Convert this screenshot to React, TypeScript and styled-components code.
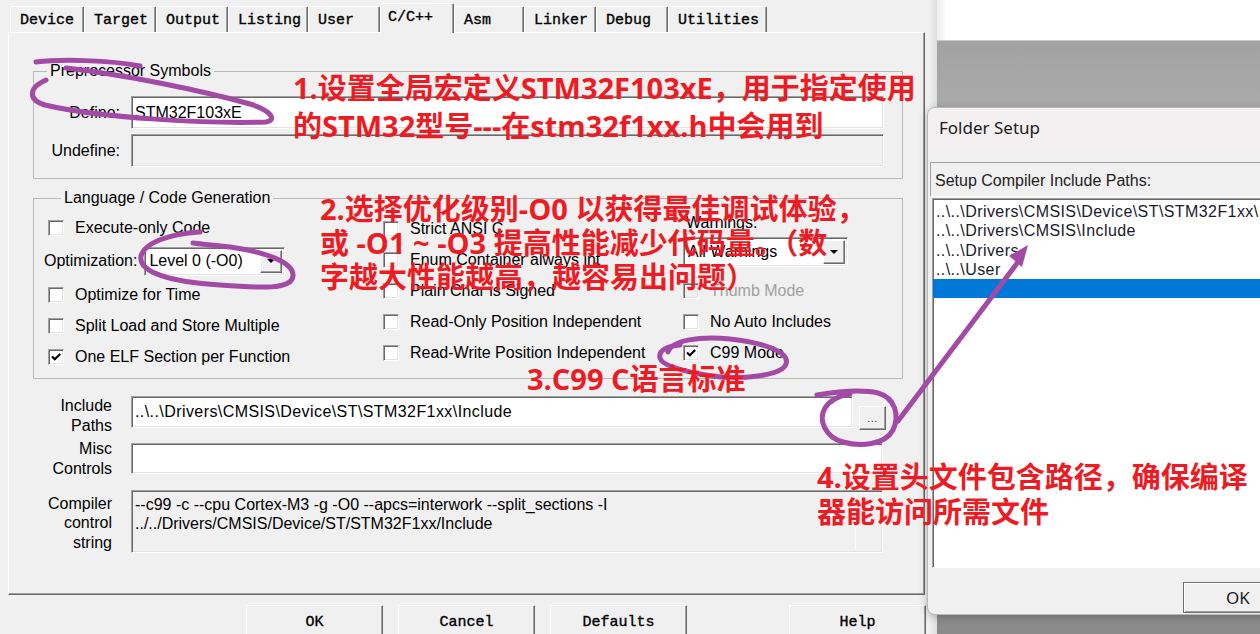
import React from "react";
import styled, { createGlobalStyle } from "styled-components";

const UI = `"Liberation Sans", Arial, sans-serif`;
const BITMAP = `"Liberation Mono", "Courier New", monospace`;
const SEGOE = `"Noto Sans", "Open Sans", sans-serif`;

const GlobalStyle = createGlobalStyle`
  html, body { margin: 0; padding: 0; background: #f0f0f0; }
  body { font-family: ${UI}; }
  * { box-sizing: border-box; }
`;

const Screen = styled.div`
  position: relative;
  width: 1260px;
  height: 634px;
  overflow: hidden;
  display: flex;
  font-family: ${UI};
  font-size: 16px;
  color: #000;
`;

/* ---------- main options window ---------- */
const MainWindow = styled.div`
  width: 937px;
  flex: none;
  display: flex;
  flex-direction: column;
  background: linear-gradient(to right, #f0f0f0 929px, #dedede 937px);
`;

const TabStrip = styled.div`
  height: 32px;
  flex: none;
  display: flex;
  align-items: flex-end;
  padding-left: 10px;
  position: relative;
  z-index: 1;
`;

const Tab = styled.div<{ $w: number; $active?: boolean }>`
  width: ${(p) => p.$w}px;
  height: ${(p) => (p.$active ? 30 : 26)}px;
  margin-bottom: ${(p) => (p.$active ? -1 : 0)}px;
  padding: ${(p) => (p.$active ? "0 0 2px 7px" : "2px 0 0 9px")};
  display: flex;
  align-items: center;
  font-family: ${BITMAP};
  font-size: 15px;
  -webkit-text-stroke: 0.35px #000;
  white-space: nowrap;
  background: #f0f0f0;
  border-top: 1px solid #fff;
  border-left: 1px solid #fff;
  border-right: 1px solid #696969;
  box-shadow: inset -1px 0 0 #a0a0a0;
  border-radius: 2px 2px 0 0;
`;

const TabPanel = styled.div`
  margin-left: 8px;
  width: 917px;
  height: 563px;
  flex: none;
  border-top: 1px solid #fff;
  border-left: 1px solid #fff;
  border-right: 1px solid #696969;
  border-bottom: 1px solid #696969;
  box-shadow: inset -1px -1px 0 #a0a0a0;
  padding: 29px 21px 0 24px;
`;

const Group = styled.fieldset<{ $pad: string; $mt?: number }>`
  margin: ${(p) => p.$mt ?? 0}px 0 0 0;
  min-width: 0;
  padding: ${(p) => p.$pad};
  border: 1px solid #b9b9b9;
`;

const Legend = styled.legend`
  margin-left: 13px;
  padding: 0 3px;
  line-height: 18px;
  font-size: 16px;
`;

const SymbolRow = styled.div`
  display: flex;
  align-items: center;
  gap: 11px;
  height: 33px;
  & + & {
    margin-top: 5px;
  }
`;

const RowLabel = styled.div<{ $w: number; $mt?: number }>`
  width: ${(p) => p.$w}px;
  flex: none;
  text-align: right;
  line-height: 19.5px;
  margin-top: ${(p) => p.$mt ?? 0}px;
`;

const TextBox = styled.div<{ $disabled?: boolean; $h?: number; $mt?: number; $path?: boolean }>`
  flex: 1;
  min-width: 0;
  height: ${(p) => (p.$h ? `${p.$h}px` : "100%")};
  margin-top: ${(p) => p.$mt ?? 0}px;
  background: ${(p) => (p.$disabled ? "#f0f0f0" : "#fff")};
  border: 1px solid;
  border-color: #a0a0a0 #fff #fff #a0a0a0;
  box-shadow: inset 1px 1px 0 #696969, inset -1px -1px 0 #e3e3e3;
  padding-left: 3px;
  display: flex;
  align-items: center;
  white-space: nowrap;
  overflow: hidden;
  letter-spacing: ${(p) => (p.$path ? "0.42px" : "normal")};
`;

const LangGrid = styled.div`
  display: grid;
  grid-template-columns: 335px 300px 1fr;
`;

const Column = styled.div<{ $mt?: number }>`
  display: flex;
  flex-direction: column;
  margin-top: ${(p) => p.$mt ?? 0}px;
`;

const CheckRow = styled.div<{ $disabled?: boolean }>`
  height: 31px;
  display: flex;
  align-items: center;
  gap: 11px;
  white-space: nowrap;
  color: ${(p) => (p.$disabled ? "#a0a0a0" : "#000")};
`;

const Box = styled.span<{ $disabled?: boolean }>`
  width: 16px;
  height: 16px;
  flex: none;
  display: flex;
  align-items: center;
  justify-content: center;
  background: ${(p) => (p.$disabled ? "#f0f0f0" : "#fff")};
  border: 1px solid;
  border-color: #a0a0a0 #fff #fff #a0a0a0;
  box-shadow: inset 1px 1px 0 #696969, inset -1px -1px 0 #e3e3e3;
`;

const OptRow = styled.div`
  height: 36px;
  display: flex;
  align-items: center;
  margin-left: -4px;
  gap: 7px;
  white-space: nowrap;
`;

const Select = styled.div<{ $w: number; $h: number }>`
  width: ${(p) => p.$w}px;
  height: ${(p) => p.$h}px;
  flex: none;
  display: flex;
  align-items: center;
  background: #fff;
  border: 1px solid;
  border-color: #a0a0a0 #fff #fff #a0a0a0;
  box-shadow: inset 1px 1px 0 #696969, inset -1px -1px 0 #e3e3e3;
  padding-left: 4px;
  white-space: nowrap;
`;

const DropButton = styled.span`
  margin-left: auto;
  margin-right: 2px;
  width: 22px;
  height: calc(100% - 4px);
  display: flex;
  align-items: center;
  justify-content: center;
  background: #f0f0f0;
  border: 1px solid;
  border-color: #fff #696969 #696969 #fff;
  box-shadow: inset -1px -1px 0 #a0a0a0;
  &::after {
    content: "";
    border-left: 4px solid transparent;
    border-right: 4px solid transparent;
    border-top: 4px solid #000;
  }
`;

const WarnLabel = styled.div`
  height: 18px;
  line-height: 18px;
  margin-top: 2px;
  padding-left: 3px;
`;

const WarnSelect = styled(Select)`
  margin-top: 5px;
  margin-bottom: 8px;
`;

const PathRow = styled.div<{ $mt: number; $pr: number }>`
  display: flex;
  align-items: flex-start;
  gap: 19px;
  margin-top: ${(p) => p.$mt}px;
  padding-right: ${(p) => p.$pr}px;
`;

const Browse = styled.div`
  width: 27px;
  height: 24px;
  margin-left: -13px;
  margin-top: 10px;
  flex: none;
  display: flex;
  align-items: center;
  justify-content: center;
  font-size: 11px;
  color: #333;
  letter-spacing: 0.5px;
  background: #f0f0f0;
  border: 1px solid;
  border-color: #fff #696969 #696969 #fff;
  box-shadow: inset -1px -1px 0 #a0a0a0;
`;

const ControlString = styled.div`
  flex: 1;
  height: 63px;
  display: flex;
  background: #f0f0f0;
  border: 1px solid;
  border-color: #a0a0a0 #fff #fff #a0a0a0;
  box-shadow: inset 1px 1px 0 #696969, inset -1px -1px 0 #e3e3e3;
`;

const ControlText = styled.div`
  flex: 1;
  padding: 4px 3px;
  line-height: 19px;
  white-space: nowrap;
  overflow: hidden;
`;

const ScrollTrack = styled.div`
  width: 26px;
  margin: 2px 1px 2px 0;
  border-left: 1px solid #fbfbfb;
  border-top: 1px solid #fbfbfb;
`;

const ButtonBar = styled.div`
  flex: 1;
  display: flex;
  align-items: flex-start;
  gap: 15px;
  padding: 10px 11px 0 246px;
`;

const PushButton = styled.div<{ $push?: boolean }>`
  width: 137px;
  height: 31px;
  flex: none;
  margin-left: ${(p) => (p.$push ? "auto" : "0")};
  padding-top: 3px;
  display: flex;
  align-items: center;
  justify-content: center;
  font-family: ${BITMAP};
  font-size: 15px;
  -webkit-text-stroke: 0.35px #000;
  background: #f0f0f0;
  border: 1px solid;
  border-color: #fff #696969 #696969 #fff;
  box-shadow: inset -1px -1px 0 #a0a0a0;
`;

/* ---------- desktop behind ---------- */
const Desktop = styled.div`
  flex: 1;
  display: flex;
  flex-direction: column;
`;

const WhiteBand = styled.div`
  height: 41px;
  background: linear-gradient(to right, #ececec, #fff 10px);
  border-bottom: 1px solid #c8c8c8;
`;

const GrayBand = styled.div`
  flex: 1;
  background: linear-gradient(#a2a2a2, #ababab 12%, #9a9a9a 70%, #8a8a8a);
`;

/* ---------- folder setup dialog ---------- */
const FolderDialog = styled.div`
  position: absolute;
  left: 927px;
  top: 107px;
  width: 345px;
  height: 508px;
  display: flex;
  flex-direction: column;
  background: #f0f0f0;
  border: 1px solid #b8b8b8;
  border-radius: 8px 0 0 8px;
  overflow: hidden;
  box-shadow: 0 2px 8px rgba(0, 0, 0, 0.25);
  z-index: 2;
`;

const TitleBar = styled.div`
  height: 44px;
  flex: none;
  display: flex;
  align-items: center;
  padding: 0 0 5px 11px;
  background: #f4eff0;
  font-family: ${SEGOE};
  font-size: 17px;
  color: #1b1b1b;
`;

const DialogBody = styled.div`
  flex: 1;
  display: flex;
  flex-direction: column;
  padding: 10px 0 0 2px;
`;

const Caption = styled.div`
  height: 35px;
  display: flex;
  align-items: center;
  padding: 3px 0 0 4px;
  border: 1px solid;
  border-color: #a0a0a0 #fff #fff #a0a0a0;
  white-space: nowrap;
  color: #222;
`;

const ListBox = styled.div`
  margin: 1px 0 0 2px;
  height: 370px;
  background: #fff;
  border: 1px solid;
  border-color: #a0a0a0 #fff #fff #a0a0a0;
  box-shadow: inset 1px 1px 0 #696969;
  padding-top: 3px;
  overflow: hidden;
`;

const ListItem = styled.div<{ $selected?: boolean }>`
  height: 19.3px;
  line-height: 19.3px;
  padding-left: 3px;
  white-space: nowrap;
  letter-spacing: 0.42px;
  color: #1a1a2a;
  background: ${(p) => (p.$selected ? "#0078d7" : "transparent")};
`;

const DialogFooter = styled.div`
  display: flex;
  padding: 14px 0 0 253px;
`;

const DialogButton = styled.div`
  width: 110px;
  height: 31px;
  flex: none;
  display: flex;
  align-items: center;
  justify-content: center;
  font-family: ${SEGOE};
  font-size: 17px;
  color: #1b1b1b;
  background: #f0f0f0;
  border: 1px solid #6f6f6f;
  box-shadow: inset 1px 1px 0 #fff, inset -1px -1px 0 #a0a0a0;
`;

/* ---------- annotations ---------- */
const Strokes = styled.svg`
  position: absolute;
  left: 0;
  top: 0;
  z-index: 3;
  pointer-events: none;
`;

const Note = styled.div<{ $x: number; $y: number; $lh: number }>`
  position: absolute;
  left: ${(p) => p.$x}px;
  top: ${(p) => p.$y}px;
  line-height: ${(p) => p.$lh}px;
  z-index: 4;
  font-family: "Open Sans", "Noto Sans CJK SC", sans-serif;
  font-weight: 700;
  font-size: 29px;
  color: #ed1c24;
  white-space: nowrap;
  pointer-events: none;
`;

const Tick = () => (
  <svg width="12" height="12" viewBox="0 0 12 12">
    <path d="M2 5.5 L4.8 8.3 L10.2 2.9" fill="none" stroke="#000" strokeWidth="2.1" />
  </svg>
);

const Check = ({ label, checked, disabled }: { label: string; checked?: boolean; disabled?: boolean }) => (
  <CheckRow $disabled={disabled}>
    <Box $disabled={disabled}>{checked && <Tick />}</Box>
    {label}
  </CheckRow>
);

const tabs: [string, number][] = [
  ["Device", 74],
  ["Target", 72],
  ["Output", 72],
  ["Listing", 80],
  ["User", 72],
  ["C/C++", 74],
  ["Asm", 70],
  ["Linker", 72],
  ["Debug", 72],
  ["Utilities", 99],
];

const paths = [
  "..\\..\\Drivers\\CMSIS\\Device\\ST\\STM32F1xx\\Include",
  "..\\..\\Drivers\\CMSIS\\Include",
  "..\\..\\Drivers",
  "..\\..\\User",
];

export default function App() {
  return (
    <>
      <GlobalStyle />
      <Screen>
        <MainWindow>
          <TabStrip>
            {tabs.map(([t, w]) => (
              <Tab key={t} $w={w} $active={t === "C/C++"}>
                {t}
              </Tab>
            ))}
          </TabStrip>
          <TabPanel>
            <Group $pad="16px 18px 11px 0">
              <Legend>Preprocessor Symbols</Legend>
              <SymbolRow>
                <RowLabel $w={86}>Define:</RowLabel>
                <TextBox>STM32F103xE</TextBox>
              </SymbolRow>
              <SymbolRow>
                <RowLabel $w={86}>Undefine:</RowLabel>
                <TextBox $disabled />
              </SymbolRow>
            </Group>

            <Group $pad="5px 0 6px 14px" $mt={10}>
              <Legend>Language / Code Generation</Legend>
              <LangGrid>
                <Column>
                  <Check label="Execute-only Code" />
                  <OptRow>
                    Optimization:
                    <Select $w={141} $h={29}>
                      Level 0 (-O0)
                      <DropButton />
                    </Select>
                  </OptRow>
                  <Check label="Optimize for Time" />
                  <Check label="Split Load and Store Multiple" />
                  <Check label="One ELF Section per Function" checked />
                </Column>
                <Column $mt={1}>
                  <Check label="Strict ANSI C" />
                  <Check label="Enum Container always int" />
                  <Check label="Plain Char is Signed" />
                  <Check label="Read-Only Position Independent" />
                  <Check label="Read-Write Position Independent" />
                </Column>
                <Column>
                  <WarnLabel>Warnings:</WarnLabel>
                  <WarnSelect $w={165} $h={30}>
                    All Warnings
                    <DropButton />
                  </WarnSelect>
                  <Check label="Thumb Mode" disabled />
                  <Check label="No Auto Includes" />
                  <Check label="C99 Mode" checked />
                </Column>
              </LangGrid>
            </Group>

            <PathRow $mt={17} $pr={17}>
              <RowLabel $w={79}>
                Include
                <br />
                Paths
              </RowLabel>
              <TextBox $h={32} $path>
                ..\..\Drivers\CMSIS\Device\ST\STM32F1xx\Include
              </TextBox>
              <Browse>...</Browse>
            </PathRow>
            <PathRow $mt={4} $pr={20}>
              <RowLabel $w={79}>
                Misc
                <br />
                Controls
              </RowLabel>
              <TextBox $h={31} $mt={4} />
            </PathRow>
            <PathRow $mt={12} $pr={20}>
              <RowLabel $w={79} $mt={3.5}>
                Compiler
                <br />
                control
                <br />
                string
              </RowLabel>
              <ControlString>
                <ControlText>
                  --c99 -c --cpu Cortex-M3 -g -O0 --apcs=interwork --split_sections -I
                  <br />
                  ../../Drivers/CMSIS/Device/ST/STM32F1xx/Include
                </ControlText>
                <ScrollTrack />
              </ControlString>
            </PathRow>
          </TabPanel>
          <ButtonBar>
            <PushButton>OK</PushButton>
            <PushButton>Cancel</PushButton>
            <PushButton>Defaults</PushButton>
            <PushButton $push>Help</PushButton>
          </ButtonBar>
        </MainWindow>

        <Desktop>
          <WhiteBand />
          <GrayBand />
        </Desktop>

        <FolderDialog>
          <TitleBar>Folder Setup</TitleBar>
          <DialogBody>
            <Caption>Setup Compiler Include Paths:</Caption>
            <ListBox>
              {paths.map((p) => (
                <ListItem key={p}>{p}</ListItem>
              ))}
              <ListItem $selected>&nbsp;</ListItem>
            </ListBox>
            <DialogFooter>
              <DialogButton>OK</DialogButton>
            </DialogFooter>
          </DialogBody>
        </FolderDialog>

        <Strokes width="1260" height="634" viewBox="0 0 1260 634">
          <g fill="none" stroke="#a24aa6" strokeWidth="5" strokeLinecap="round" strokeLinejoin="round">
            <path d="M140 66 C110 60, 60 59, 36 62" />
            <path d="M46 80 C28 88, 28 100, 45 105 C100 118, 210 124, 266 122 C278 120, 270 110, 250 104 C200 90, 120 74, 66 68" />
            <path d="M200 232 C170 234, 145 242, 141 256 C138 272, 170 282, 220 285 C260 288, 292 290, 293 276 C294 262, 265 252, 230 247 C210 245, 200 244, 193 243" />
            <path d="M668 352 C672 340, 700 336, 730 339 C765 343, 790 352, 786 364 C782 376, 740 380, 712 376 C685 372, 662 366, 660 358 C658 350, 668 346, 680 345" />
            <path d="M817 395 C835 392, 860 389, 878 393 C895 398, 900 415, 893 430 C885 445, 860 447, 843 442 C825 437, 818 420, 825 408 C830 400, 838 396, 850 394" />
            <path d="M898 421 L1018 262" />
          </g>
          <polygon points="1028,245 1022,267 1009,256" fill="#a24aa6" />
        </Strokes>

        <Note $x={293} $y={69} $lh={38}>
          1.设置全局宏定义STM32F103xE，用于指定使用
          <br />
          的STM32型号---在stm32f1xx.h中会用到
        </Note>
        <Note $x={320} $y={192} $lh={34}>
          2.选择优化级别-O0 以获得最佳调试体验，
          <br />
          或 -O1 ~ -O3 提高性能减少代码量。（数
          <br />
          字越大性能越高，越容易出问题）
        </Note>
        <Note $x={527} $y={360} $lh={38}>
          3.C99 C语言标准
        </Note>
        <Note $x={817} $y={459} $lh={35}>
          4.设置头文件包含路径，确保编译
          <br />
          器能访问所需文件
        </Note>
      </Screen>
    </>
  );
}
